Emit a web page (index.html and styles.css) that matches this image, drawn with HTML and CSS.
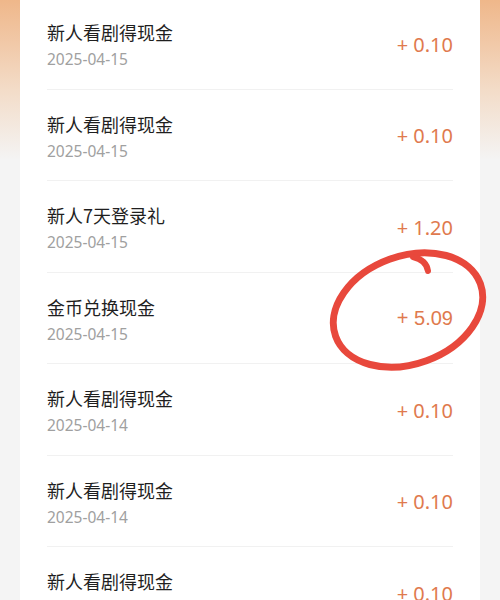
FILE: index.html
```html
<!DOCTYPE html>
<html>
<head>
  <meta charset='UTF-8'>
  <meta name='viewport' content='width=device-width, initial-scale=1.0'>
  <title>收益明细</title>
  <link rel="stylesheet" href="styles.css">
</head>
<body>
  <div class='card'>
    <div class='row'>
      <div class='info'><div class='title'>新人看剧得现金</div><div class='date'>2025-04-15</div></div>
      <div class='amount'>+ 0.10</div>
    </div>
    <div class='row'>
      <div class='info'><div class='title'>新人看剧得现金</div><div class='date'>2025-04-15</div></div>
      <div class='amount'>+ 0.10</div>
    </div>
    <div class='row'>
      <div class='info'><div class='title'>新人7天登录礼</div><div class='date'>2025-04-15</div></div>
      <div class='amount'>+ 1.20</div>
    </div>
    <div class='row'>
      <div class='info'><div class='title'>金币兑换现金</div><div class='date'>2025-04-15</div></div>
      <div class='amount amount-marked'>+ 5.09</div>
      <!-- hand drawn mark -->
      <svg class='mark' width='170' height='130' viewBox='320 250 170 130'>
        <ellipse cx='408' cy='312' rx='77' ry='54' transform='rotate(-20 408 312)' fill='none' stroke='#e8483c' stroke-width='7'/>
        <path d='M428 273 C427 266 422 261 413 259' fill='none' stroke='#e8483c' stroke-width='6' stroke-linecap='round'/>
      </svg>
    </div>
    <div class='row'>
      <div class='info'><div class='title'>新人看剧得现金</div><div class='date'>2025-04-14</div></div>
      <div class='amount'>+ 0.10</div>
    </div>
    <div class='row'>
      <div class='info'><div class='title'>新人看剧得现金</div><div class='date'>2025-04-14</div></div>
      <div class='amount'>+ 0.10</div>
    </div>
    <div class='row'>
      <div class='info'><div class='title'>新人看剧得现金</div><div class='date'>2025-04-14</div></div>
      <div class='amount'>+ 0.10</div>
    </div>
  </div>
</body>
</html>
```
FILE: styles.css
```css
* { margin: 0; padding: 0; box-sizing: border-box; }
html, body { height: 100%; overflow: hidden; }
body { font-family: "Noto Sans CJK SC", sans-serif; background: linear-gradient(180deg, #efb78a 0px, #f3dcc8 90px, #f4f4f4 160px) #f4f4f4; }
.card { margin: -2px 20px 0; background: #fff; padding: 0 27px; position: relative; }
.row { display: flex; justify-content: space-between; align-items: center; height: 91.5px; padding: 21px 0 15.5px; border-bottom: 1px solid #f1f1f1; }
.title { font-size: 18px; line-height: 26px; color: #1f1f1f; }
.date { font-family: "Noto Sans", sans-serif; font-size: 15.5px; line-height: 28px; color: #a0a0a0; }
.amount { font-family: "Noto Sans", sans-serif; font-size: 20px; color: #df7a4e; margin-bottom: 4px; }
.amount-marked { font-family: "Liberation Sans", sans-serif; }
.mark { position: absolute; left: 300px; top: 250px; }
```
